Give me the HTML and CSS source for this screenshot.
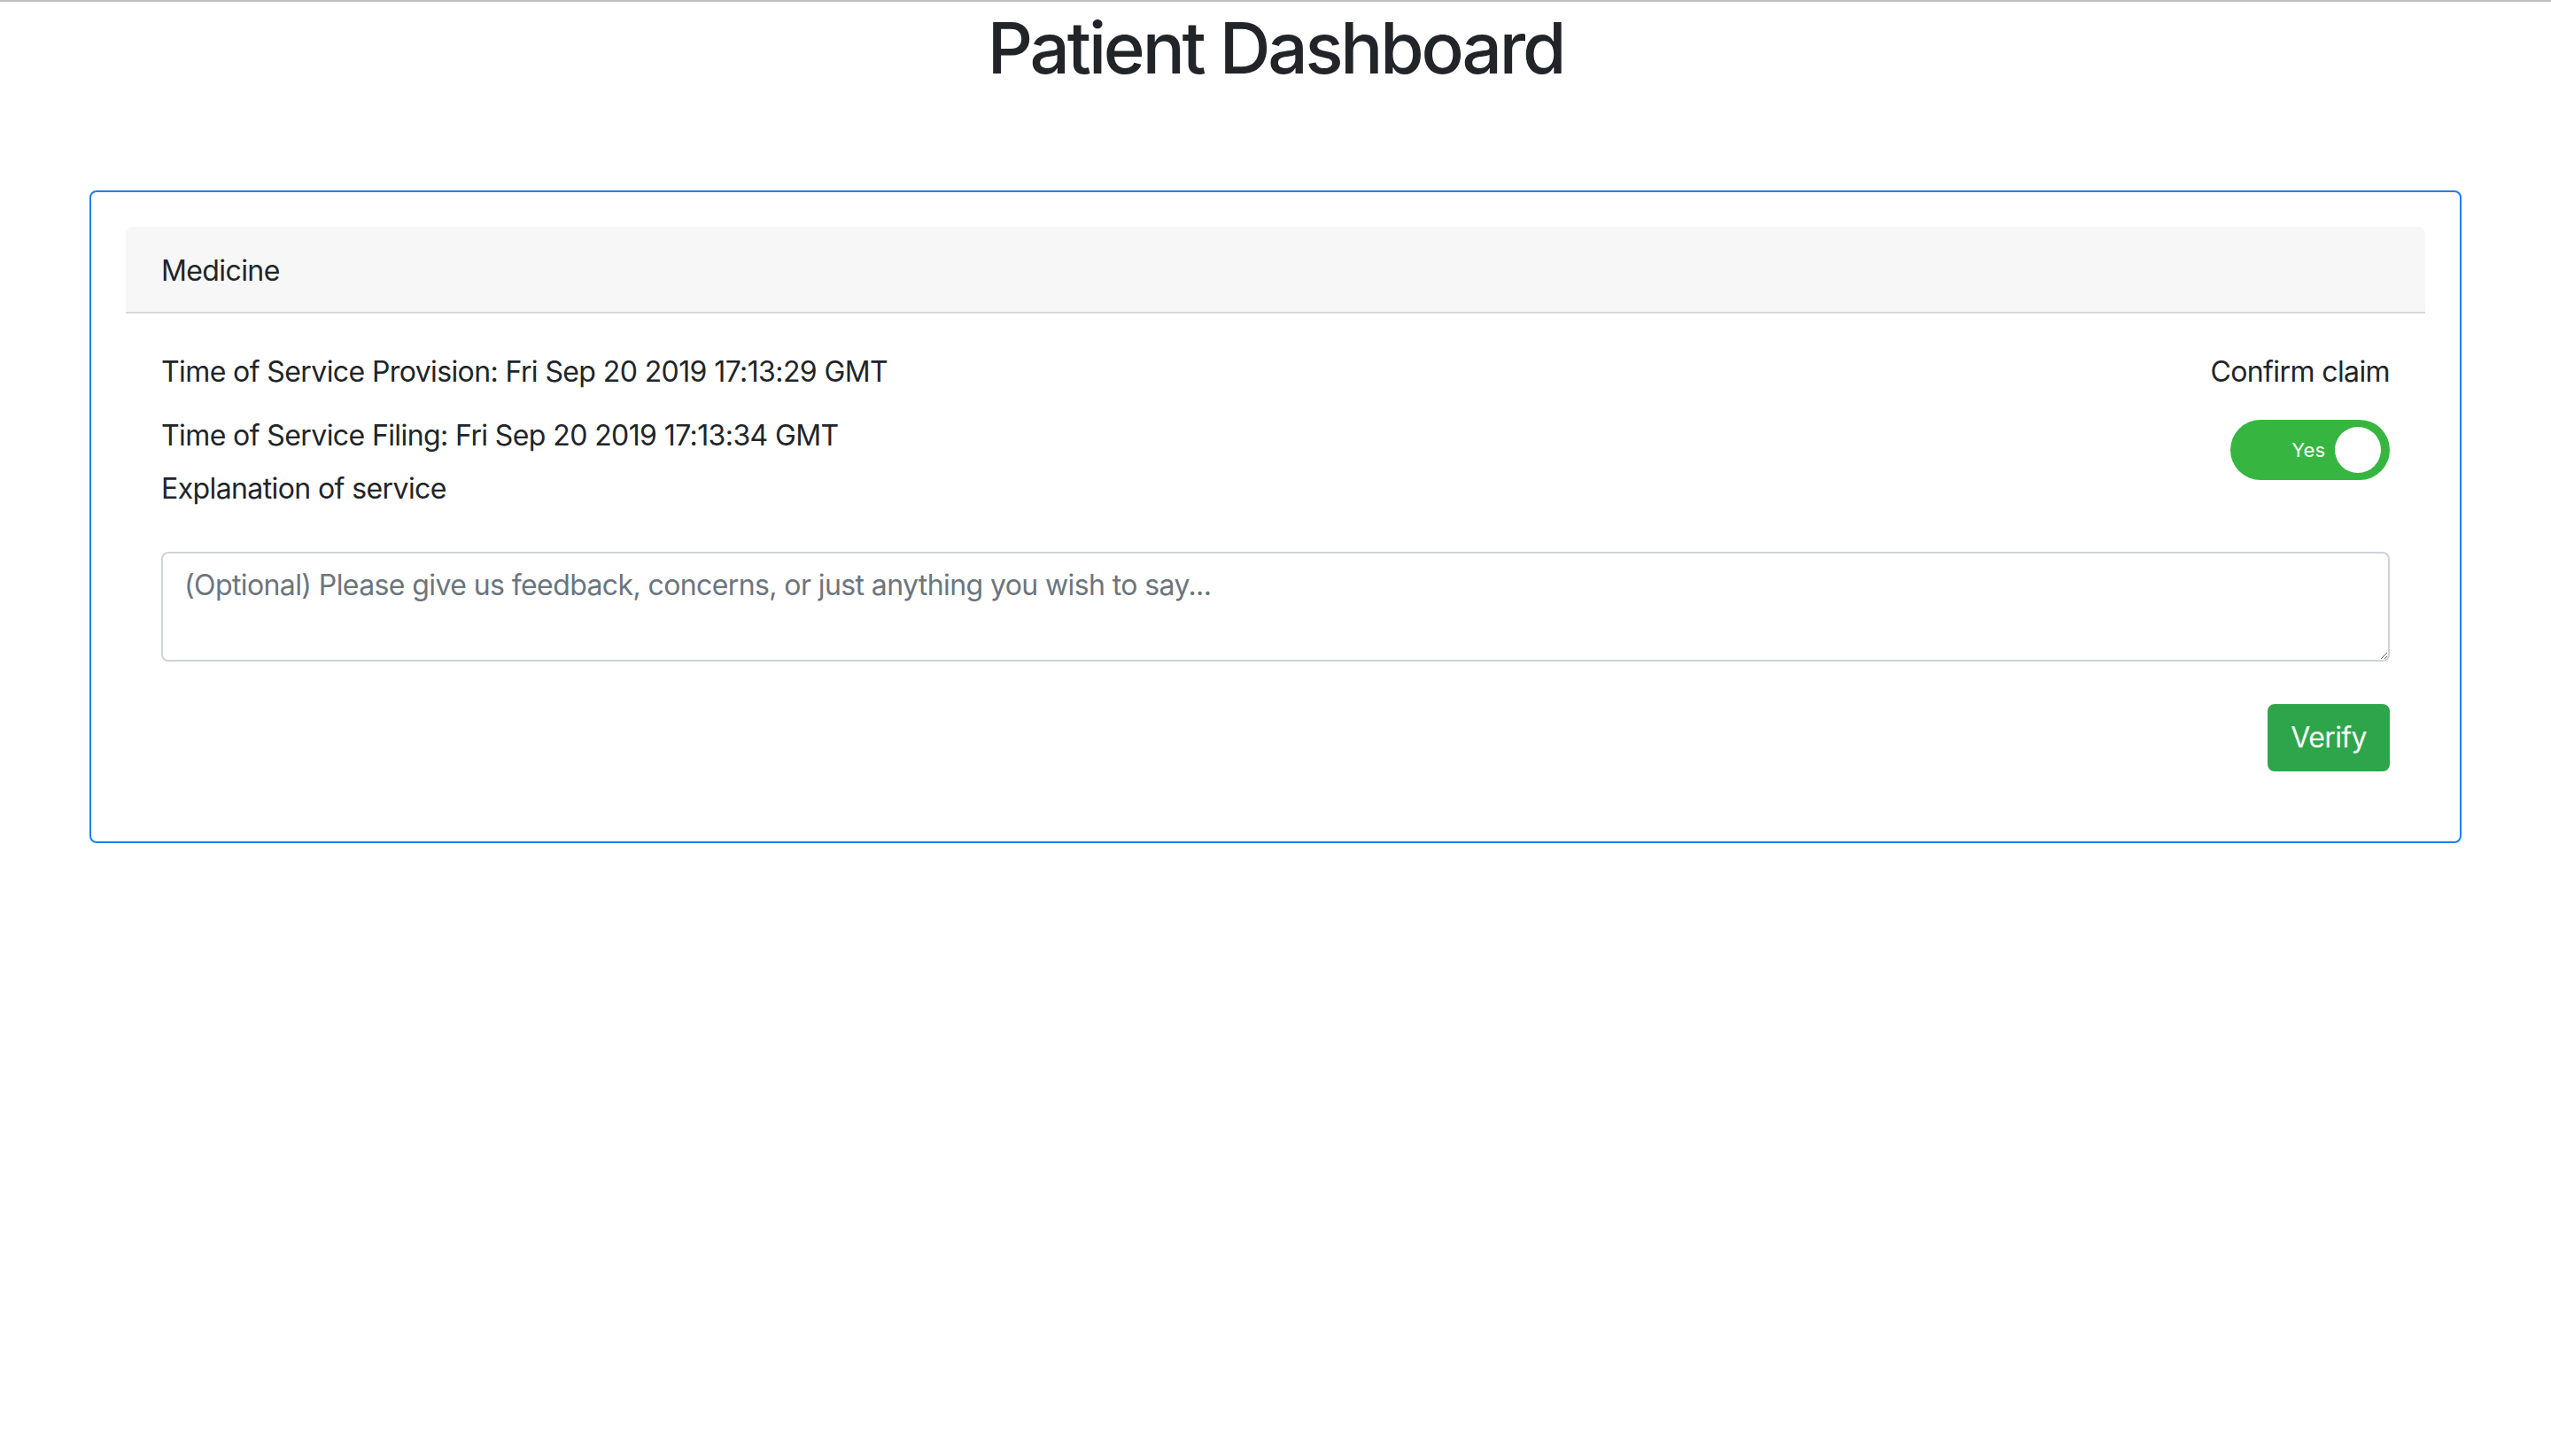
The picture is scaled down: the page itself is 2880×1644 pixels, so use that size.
FILE: index.html
```html
<!DOCTYPE html>
<html lang="en">
<head>
<meta charset="utf-8">
<title>Patient Dashboard</title>
<link rel="stylesheet" href="styles.css">
</head>
<body>
<div class="topbar"></div>
<h1 class="page-title">Patient Dashboard</h1>
<main class="content">
  <section class="claim-card">
    <div class="med-card">
      <div class="med-header">Medicine</div>
      <div class="med-body">
        <div class="info-row">
          <div class="info-col">
            <p class="info-line line-provision">Time of Service Provision: Fri Sep 20 2019 17:13:29 GMT</p>
            <p class="info-line line-filing">Time of Service Filing: Fri Sep 20 2019 17:13:34 GMT</p>
            <p class="info-line line-explain">Explanation of service</p>
          </div>
          <div class="confirm-col">
            <div class="confirm-label">Confirm claim</div>
            <div class="toggle">
              <span class="toggle-text">Yes</span>
              <span class="toggle-knob"></span>
            </div>
          </div>
        </div>
        <textarea class="feedback" rows="2" placeholder="(Optional) Please give us feedback, concerns, or just anything you wish to say..."></textarea>
        <div class="actions">
          <button class="verify-btn" type="button">Verify</button>
        </div>
      </div>
    </div>
  </section>
</main>
</body>
</html>
```

FILE: styles.css
```css
* { box-sizing: border-box; }

html, body {
  margin: 0;
  padding: 0;
  background: #ffffff;
}

body {
  font-family: Inter, "Liberation Sans", sans-serif;
  font-size: 32px;
  line-height: 48px;
  letter-spacing: -0.6px;
  color: #212529;
}

.topbar {
  height: 2px;
  background: #bdbdbd;
}

.page-title {
  margin: 4px 0 0;
  text-align: center;
  font-size: 80px;
  line-height: 96px;
  font-weight: 500;
  letter-spacing: -3.2px;
  color: #212529;
}

.content {
  margin: 113px 101px 0 101px;
}

.claim-card {
  border: 2px solid #1a7ff7;
  border-radius: 8px;
  padding: 39px;
}

.med-header {
  background: #f7f7f7;
  border-bottom: 2px solid #d9d9d9;
  border-radius: 8px 8px 0 0;
  padding: 26px 40px 22px;
  height: 98px;
}

.med-body {
  padding: 42px 40px 40px;
}

.info-row {
  display: flex;
  justify-content: space-between;
  align-items: flex-start;
}

.info-line {
  margin: 0;
}

.line-provision { margin-bottom: 24px; }
.line-filing { margin-bottom: 12px; }

.confirm-col {
  display: flex;
  flex-direction: column;
  align-items: flex-end;
}

.confirm-label {
  margin-bottom: 30px;
}

.toggle {
  width: 180px;
  height: 68px;
  border-radius: 34px;
  background: #36b640;
  display: flex;
  align-items: center;
  justify-content: flex-end;
  padding-right: 10px;
  gap: 11px;
}

.toggle-text {
  color: #ffffff;
  font-size: 22px;
  line-height: 28px;
  letter-spacing: 0;
}

.toggle-knob {
  width: 52px;
  height: 52px;
  border-radius: 50%;
  background: #ffffff;
}

.feedback {
  display: block;
  width: 100%;
  height: 124px;
  margin-top: 47px;
  border: 2px solid #ced4da;
  border-radius: 8px;
  padding: 12px 24px;
  font-family: inherit;
  font-size: 32px;
  line-height: 48px;
  letter-spacing: -0.6px;
  color: #495057;
  background: #ffffff;
}

.feedback::placeholder {
  color: #6c757d;
}

.actions {
  display: flex;
  justify-content: flex-end;
  margin-top: 48px;
}

.verify-btn {
  font-family: inherit;
  font-size: 32px;
  line-height: 48px;
  letter-spacing: -0.6px;
  color: #ffffff;
  background: #2fa54b;
  border: 2px solid #2fa54b;
  border-radius: 8px;
  padding: 12px 24px;
}
```
